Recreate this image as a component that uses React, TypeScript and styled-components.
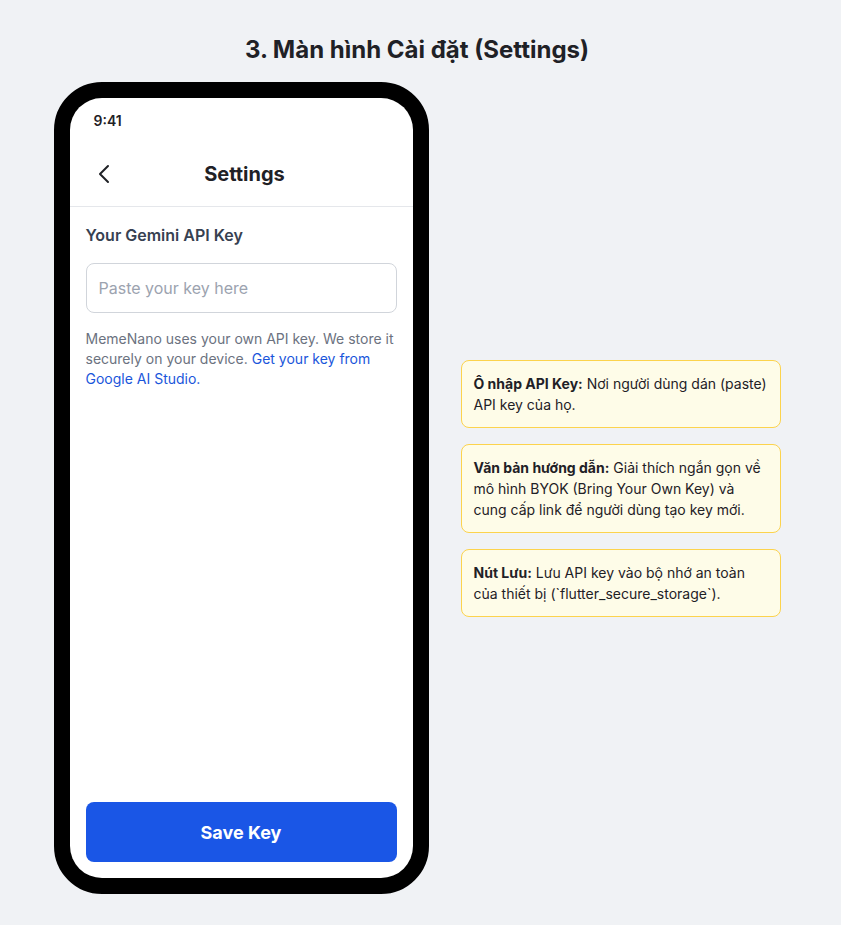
import React from "react";
import styled, { createGlobalStyle } from "styled-components";

const GlobalStyle = createGlobalStyle`
  * { box-sizing: border-box; }
  html, body { margin: 0; padding: 0; background: #f0f2f5; }
  body { font-family: Inter, "Noto Sans", "Liberation Sans", sans-serif; color: #1f2937; }
`;

const Page = styled.div`
  display: flex;
  flex-direction: column;
  align-items: center;
  padding: 34px 7px 30px 0;
  gap: 16px;
`;

const Title = styled.h1`
  margin: 0;
  font-size: 24px;
  line-height: 32px;
  font-weight: 700;
  color: #1f2126;
`;

const Row = styled.div`
  display: flex;
  align-items: center;
  gap: 32px;
`;

const Phone = styled.div`
  width: 375px;
  height: 812px;
  border: 16px solid #000;
  border-radius: 48px;
  background: #000;
  flex-shrink: 0;
`;

const Screen = styled.div`
  width: 100%;
  height: 100%;
  background: #fff;
  border-radius: 32px;
  overflow: hidden;
  display: flex;
  flex-direction: column;
`;

const StatusBar = styled.div`
  height: 44px;
  padding: 0 24px;
  display: flex;
  align-items: center;
  font-size: 14px;
  font-weight: 600;
  color: #1f2126;
`;

const Header = styled.div`
  height: 65px;
  display: flex;
  align-items: center;
  padding: 0 16px;
  border-bottom: 1px solid #e5e7eb;
`;

const BackButton = styled.button`
  width: 40px;
  height: 40px;
  padding: 0;
  margin-left: 2px;
  border: none;
  background: none;
  display: flex;
  align-items: center;
  justify-content: flex-start;
  color: #1f2126;
  cursor: pointer;
`;

const HeaderTitle = styled.h2`
  flex: 1;
  margin: 0;
  text-align: center;
  font-size: 20px;
  font-weight: 700;
  color: #1f2126;
`;

const HeaderSpacer = styled.div`
  width: 35px;
`;

const Content = styled.div`
  flex: 1;
  display: flex;
  flex-direction: column;
  padding: 16px;
`;

const Label = styled.label`
  font-size: 16px;
  line-height: 24px;
  font-weight: 600;
  color: #374151;
  margin-bottom: 16px;
`;

const Input = styled.input`
  width: 100%;
  height: 50px;
  border: 1px solid #d1d5db;
  border-radius: 8px;
  padding: 0 12px;
  font-family: inherit;
  font-size: 16px;
  color: #1f2937;
  outline: none;
  &::placeholder { color: #9ca3af; }
`;

const Help = styled.p`
  margin: 16px 0 0;
  font-size: 14px;
  line-height: 20px;
  color: #6b7280;
`;

const Link = styled.a`
  color: #1a56db;
  text-decoration: none;
`;

const SaveButton = styled.button`
  margin-top: auto;
  width: 100%;
  height: 60px;
  border: none;
  border-radius: 8px;
  background: #1a56e6;
  color: #fff;
  font-family: inherit;
  font-size: 18px;
  font-weight: 700;
  cursor: pointer;
`;

const Notes = styled.div`
  width: 320px;
  display: flex;
  flex-direction: column;
  gap: 16px;
`;

const Note = styled.div`
  background: #fefce8;
  border: 1px solid #fcd34d;
  border-radius: 8px;
  padding: 12px;
  font-size: 14px;
  line-height: 21px;
  color: #1f2126;
`;

const ChevronLeft = () => (
  <svg width="32" height="32" viewBox="0 0 24 24" fill="none" stroke="currentColor" strokeWidth="1.5" strokeLinecap="round" strokeLinejoin="round">
    <path d="m15 18-6-6 6-6" />
  </svg>
);

export default function App() {
  return (
    <>
      <GlobalStyle />
      <Page>
        <Title>3. Màn hình Cài đặt (Settings)</Title>
        <Row>
          <Phone>
            <Screen>
              <StatusBar>9:41</StatusBar>
              <Header>
                <BackButton aria-label="Back"><ChevronLeft /></BackButton>
                <HeaderTitle>Settings</HeaderTitle>
                <HeaderSpacer />
              </Header>
              <Content>
                <Label>Your Gemini API Key</Label>
                <Input placeholder="Paste your key here" />
                <Help>
                  MemeNano uses your own API key. We store it securely on your device.{" "}
                  <Link href="#">Get your key from Google AI Studio.</Link>
                </Help>
                <SaveButton>Save Key</SaveButton>
              </Content>
            </Screen>
          </Phone>
          <Notes>
            <Note><strong>Ô nhập API Key:</strong> Nơi người dùng dán (paste) API key của họ.</Note>
            <Note><strong>Văn bản hướng dẫn:</strong> Giải thích ngắn gọn về mô hình BYOK (Bring Your Own Key) và cung cấp link để người dùng tạo key mới.</Note>
            <Note><strong>Nút Lưu:</strong> Lưu API key vào bộ nhớ an toàn của thiết bị (`flutter_secure_storage`).</Note>
          </Notes>
        </Row>
      </Page>
    </>
  );
}
